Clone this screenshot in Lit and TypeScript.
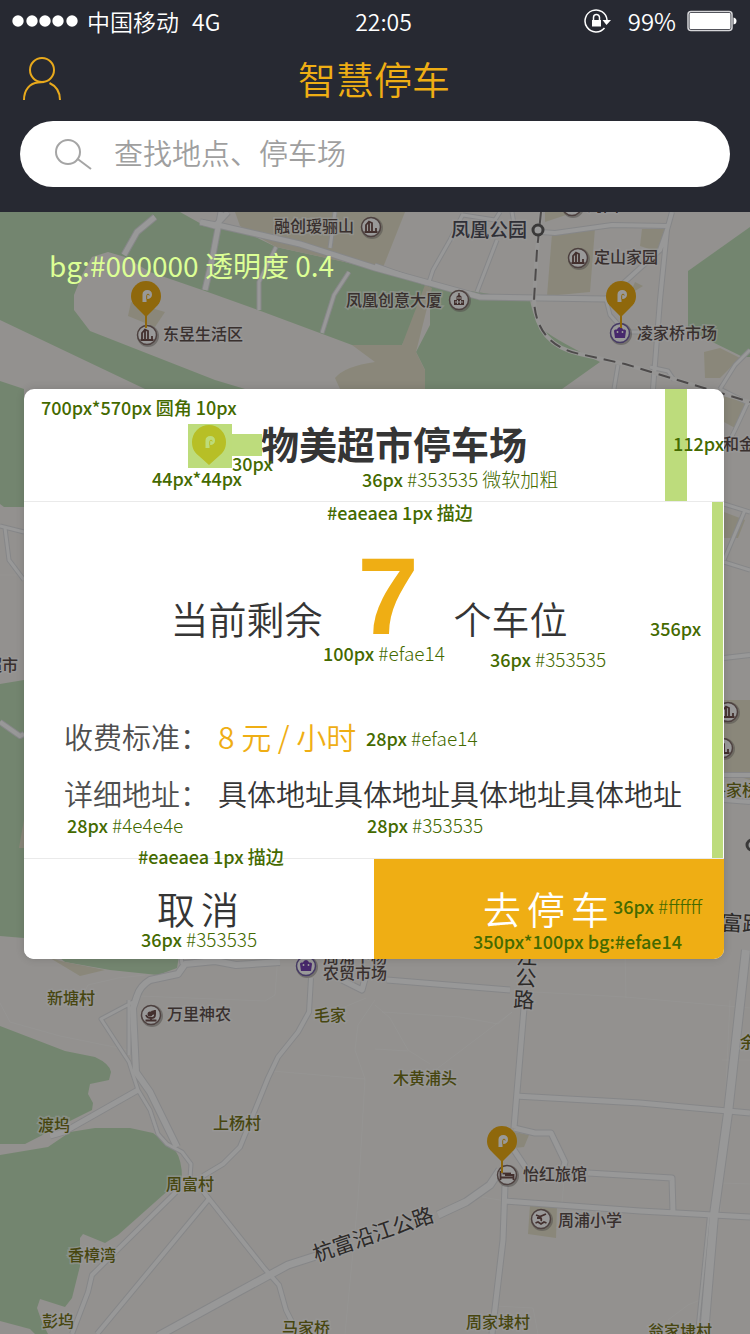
import { LitElement, html, svg, css } from "lit";
import { customElement } from "lit/decorators.js";
import { styleMap } from "lit/directives/style-map.js";

const FONT = css`"Noto Sans CJK SC", "Noto Sans", sans-serif`;

type Label = { x: number; y: number; text: string; kind: "poi" | "village" | "place" | "road"; turn?: number };

const LABELS: Label[] = [
  { x: 274, y: 232, text: "融创瑷骊山", kind: "poi" },
  { x: 346, y: 306, text: "凤凰创意大厦", kind: "poi" },
  { x: 594, y: 263, text: "定山家园", kind: "poi" },
  { x: 587, y: 211, text: "湾国", kind: "poi" },
  { x: 637, y: 339, text: "凌家桥市场", kind: "poi" },
  { x: 163, y: 340, text: "东昱生活区", kind: "poi" },
  { x: -14, y: 671, text: "超市", kind: "poi" },
  { x: 723, y: 450, text: "和金", kind: "poi" },
  { x: 323, y: 963, text: "周浦下杨", kind: "poi" },
  { x: 323, y: 979, text: "农贸市场", kind: "poi" },
  { x: 167, y: 1020, text: "万里神农", kind: "poi" },
  { x: 523, y: 1180, text: "怡红旅馆", kind: "poi" },
  { x: 558, y: 1226, text: "周浦小学", kind: "poi" },
  { x: 47, y: 1004, text: "新塘村", kind: "village" },
  { x: 314, y: 1021, text: "毛家", kind: "village" },
  { x: 393, y: 1084, text: "木黄浦头", kind: "village" },
  { x: 38, y: 1131, text: "渡坞", kind: "village" },
  { x: 213, y: 1129, text: "上杨村", kind: "village" },
  { x: 166, y: 1190, text: "周富村", kind: "village" },
  { x: 68, y: 1261, text: "香樟湾", kind: "village" },
  { x: 42, y: 1327, text: "彭坞", kind: "village" },
  { x: 282, y: 1334, text: "马家桥", kind: "village" },
  { x: 466, y: 1328, text: "周家埭村", kind: "village" },
  { x: 648, y: 1337, text: "翁家埭村", kind: "village" },
  { x: 740, y: 1048, text: "余家", kind: "village" },
  { x: 710, y: 796, text: "洛家桥", kind: "village" },
  { x: 451, y: 237, text: "凤凰公园", kind: "place" },
  { x: 316, y: 1262, text: "杭富沿江公路", kind: "road", turn: -19 },
  { x: 516, y: 964, text: "江", kind: "road", turn: 3 },
  { x: 515, y: 985, text: "公", kind: "road", turn: 3 },
  { x: 513, y: 1007, text: "路", kind: "road", turn: 3 },
  { x: 721, y: 930, text: "富路", kind: "road", turn: 3 },
];

const GREENS = [
  "M0 212H180L205 226L245 232L276 247L345 262L430 285L426 300L402 345H352L258 310L205 291L150 272L125 257L108 252L92 257L82 275L74 295V310L90 331L215 380L245 389H145L0 320Z",
  "M430 285L530 300Q534 322 545 331T600 362L562 389H425V370L416 352L430 325Z",
  "M688 271L750 227V357H743L688 330Z",
  "M0 381L24 389V507H4L0 504Z",
  "M0 684L24 680V938L0 936Z",
  "M50 950H180L177 968L158 975L110 970L65 962Z",
  "M0 1026L65 1051L95 1057Q110 1064 111 1072L109 1080L90 1084L88 1094L93 1103L92 1110L68 1122L25 1144H0Z",
  "M0 1155L48 1147L70 1132L95 1128H130L153 1133L175 1150Q182 1160 182 1178L163 1195L118 1235L105 1243L83 1234L80 1238V1266L72 1298L65 1307L40 1299L37 1308L42 1322L48 1334H35L30 1329L0 1321Z",
];

const BEIGES = [
  "M235 212H405L382 270L345 262L276 247L240 226Z",
  "M545 212H575L545 222Z",
  "M552 234L595 228L590 292L547 296Z",
  "M642 229H665L658 252L640 246Z",
  "M131 302L165 312L155 327L128 316Z",
  "M352 345H402L425 285L432 288L416 352L425 370V389H340L335 378Q345 366 375 362Z",
  "M704 352L720 348L740 358L720 378H705Z",
  "M724 389L748 402L735 428L724 422Z",
  "M724 512L745 520L738 538H724Z",
  "M724 700H750V780L724 772Z",
  "M635 282L643 286L630 294Z",
  "M514 1132L529 1135L524 1147L514 1148Z",
  "M530 1205L557 1207L556 1238L528 1234Z",
  "M50 958L65 962L105 970L80 976Z",
  "M24 820L19 848H24Z",
];

const ROADS: [number, string][] = [
  [6, "M228 212L215 226L201 222M221 212L212 260L205 290M155 217L137 232L124 255"],
  [6, "M200 222L222 226L300 244L375 268L480 297L606 299"],
  [4, "M335 212L330 248M276 247L259 282V310M349 272L334 295L322 333"],
  [4, "M375 265L428 284M463 214L450 240L433 270L428 285M497 240L477 292M463 215L495 220L500 212M512 212L515 230"],
  [5, "M541 232L555 233L612 225L668 226M672 212L667 230L660 300L653 389M667 230L660 250L606 299"],
  [4, "M606 299L610 315L625 332L652 332M618 365L614 389M650 367L668 371L674 380M750 350L735 365L720 389"],
  [4, "M720 389L750 404M748 402L735 430L724 452M724 504L750 512M745 510L724 560M724 562L750 570"],
  [4, "M0 526L24 532M5 528L9 560L24 580"],
  [5, "M0 722L20 736L24 734M724 658L750 655M724 775H750M724 800L750 802"],
  [7, "M280 962L236 965L215 961L185 964L178 974L150 980Q140 986 137 996L133 1008L136 1072L150 1092L177 1147"],
  [4, "M180 950L182 964M129 1000V1055M133 1002L101 1019L129 1062L138 1090L150 1110L158 1134L167 1144L182 1152L191 1164L190 1178"],
  [6, "M138 1090L64 1132L50 1136"],
  [5, "M311 978L309 1012L298 1032L278 1057L268 1078L253 1115L240 1147L223 1164L203 1176"],
  [5, "M176 1192L92 1275L88 1292L72 1334M208 1200L97 1334M202 1190L264 1268L279 1285L286 1310L292 1322"],
  [8, "M158 1336L240 1291L288 1265L316 1256M438 1215L466 1202L490 1185L500 1170"],
  [6, "M524 1008L514 1128M514 1128L535 1133H551L565 1162L562 1172M514 1150L526 1168"],
  [6, "M387 980L510 990M342 980L362 990L366 975M515 1096L640 1103L750 1113"],
  [6, "M505 1185L503 1240L492 1334M505 1201L640 1211L750 1217M588 1173L672 1178L673 1212"],
  [9, "M746 950L728 1113L714 1215L704 1334"],
  [3, "M709 1215L697 1334"],
];

const LANES =
  "M342 1008L366 998M375 1005L390 1018L408 1050L430 1064M382 1012L460 1017L498 1024L512 1012L438 1068M375 1049L408 1051M535 992L625 997L750 1008M625 950L626 998M272 1071L365 1079L358 1200L345 1334M365 1079L355 1050L358 1025L375 1000M139 996L265 1001L275 995L278 955M0 1003L10 1022L60 1036L129 1050M78 1005L88 985L118 978L145 975M482 1197L505 1201M565 1170L562 1202M495 1306L533 1308L538 1334M668 1320L688 1305L700 1300M722 1060H750M722 1183L750 1184M730 1000L720 1215M24 575H0";

type Poi = { x: number; y: number; kind: "building" | "tower" | "shop" | "farm" | "bed" | "school" };

const POIS: Poi[] = [
  { x: 371, y: 227, kind: "building" },
  { x: 578, y: 258, kind: "building" },
  { x: 572, y: 206, kind: "building" },
  { x: 147, y: 335, kind: "building" },
  { x: 728, y: 712, kind: "building" },
  { x: 723, y: 748, kind: "building" },
  { x: 459, y: 300, kind: "tower" },
  { x: 620, y: 333, kind: "shop" },
  { x: 306, y: 966, kind: "shop" },
  { x: 151, y: 1015, kind: "farm" },
  { x: 507, y: 1175, kind: "bed" },
  { x: 541, y: 1219, kind: "school" },
];

const GLYPHS = {
  building: svg`<path class="line" d="M-5 5V-2L-2 -5.500L1 -4V5M-2 5V-5M5 5V1M-6.500 5H6.500"/>`,
  tower: svg`<path class="solid" d="M-.7 -7H.7V-5L2.500 -3.500V0H5V5H-5V0H-2.500V-3.500L-.7 -5Z"/><path class="cut" d="M-2 -2H2M-4 2H4M-1.500 0V4M1.500 0V4"/>`,
  shop: svg`<path class="shop" d="M-6 -2Q-6 -3.500 -4.500 -3.500H-3Q-2.500 -6 0 -6T3 -3.500H4.500Q6 -3.500 6 -2L5 5H-5Z"/><path class="eyes" d="M-2.500 -2V0M2.500 -2V0"/>`,
  farm: svg`<path class="line" d="M-5.500 5.500H5.500M0 5V3M-5 0Q-4 3 0 3T4 0V-5"/><circle class="solid" cx="-1" cy="-1" r="2.500"/><path class="solid" d="M0 -4L4 -5L5 -1L1 0Z"/>`,
  bed: svg`<path class="line" d="M-6.500 -4V5M-6.500 2.500H6.500M6.500 5V0H-2"/><path class="line" d="M-4.500 -1.500H4"/>`,
  school: svg`<path class="line" d="M-5 -4L-1 -2.500L5 -5M-4 -1H0M-1 -2Q1 0 0 2M-5.500 4L-3 3L0 5L3 3L5.500 4"/>`,
};

const letterP = svg`
  <path class="letter" d="M-3.500 6V-1.500C-3.500 -4.500 -1.500 -6 1.300 -6C4.200 -6 6 -4.300 6 -1.500C6 1 4.500 2.800 2 3H0.500V6Z"/>
  <path class="slit" d="M0.700 3.200V-0.300Q0.700 -1.800 2 -1.800T3.200 -0.500"/>`;

const PINS = [
  { x: 146, y: 296 },
  { x: 621, y: 296 },
  { x: 502, y: 1141 },
];

@customElement("parking-map")
class ParkingMap extends LitElement {
  static styles = css`
    :host { display: block; overflow: hidden; background: #f5f2ee; }
    svg { display: block; width: 100%; height: 100%; }
    .green { fill: #c0deb9; }
    .beige { fill: #e6e2cb; }
    .edge { fill: none; stroke: #dfe0e3; stroke-linejoin: round; }
    .road { fill: none; stroke: #fdfdfd; stroke-linejoin: round; }
    .lane { fill: none; stroke: #fff; stroke-opacity: 0.4; stroke-width: 1; }
    .rail { fill: none; stroke: #faf9f7; stroke-width: 4; }
    .ties { fill: none; stroke: #807c7c; stroke-width: 2; stroke-dasharray: 12 7; }
    .station { fill: #fff; stroke: #62605f; stroke-width: 3; }
    text { font-family: ${FONT}; font-weight: 500; paint-order: stroke; stroke: #fff; stroke-opacity: 0.6; stroke-width: 3px; }
    .poi { font-size: 16px; fill: #5f504e; }
    .village { font-size: 16px; fill: #77761a; }
    .place { font-size: 19px; fill: #4f4f5b; }
    .road-name { font-size: 21px; font-weight: 400; fill: #4b4644; }
    .ring { fill: #fff; stroke: #806c69; stroke-width: 1.500; }
    .ring-shop { stroke: #7561a8; }
    .halo { fill: #857f7c; fill-opacity: 0.5; }
    .line { fill: none; stroke: #70504d; stroke-width: 1.800; }
    .solid { fill: #70504d; }
    .cut { fill: none; stroke: #fff; stroke-width: 1; }
    .shop { fill: #7743b4; }
    .eyes { stroke: #fff; stroke-width: 1.500; }
    .pin { fill: #efae14; }
    .stem { stroke: #efae14; stroke-width: 2; }
    .letter { fill: #fff; }
    .slit { fill: none; stroke: #efae14; stroke-width: 1; }
  `;

  render() {
    return html`
      <svg viewBox="0 212 750 1122" preserveAspectRatio="xMidYMin slice" role="img" aria-label="地图">
        ${GREENS.map((d) => svg`<path class="green" d=${d} />`)}
        ${BEIGES.map((d) => svg`<path class="beige" d=${d} />`)}
        <path class="lane" d=${LANES} />
        ${ROADS.map(([w, d]) => svg`<path class="edge" stroke-width=${w + 1} d=${d} />`)}
        ${ROADS.map(([w, d]) => svg`<path class="road" stroke-width=${w - 1} d=${d} />`)}
        <path class="rail" d="M541 212L537 250L534 300Q536 345 580 354L625 364L750 402" />
        <path class="ties" d="M541 212L537 250L534 300Q536 345 580 354L625 364L750 402" />
        <circle class="station" cx="538" cy="230" r="5" />
        <circle class="station" cx="752" cy="845" r="5" />
        ${POIS.map(
          (p) => svg`<g transform="translate(${p.x} ${p.y})">
            <circle class="halo" cx="1" cy="1" r="11" />
            <circle class="ring ${p.kind === "shop" ? "ring-shop" : ""}" r="9.500" />
            ${GLYPHS[p.kind]}
          </g>`
        )}
        ${LABELS.map(
          (l) => svg`<text class=${l.kind === "road" ? "road-name" : l.kind} transform="translate(${l.x} ${l.y}) rotate(${l.turn ?? 0})">${l.text}</text>`
        )}
        ${PINS.map(
          (p) => svg`<g transform="translate(${p.x} ${p.y})">
            <path class="stem" d="M0 15V32" />
            <path class="pin" d="M0 -15A15 15 0 0 1 15 0C15 6 12 9 9 12L0 21L-9 12C-12 9 -15 6 -15 0A15 15 0 0 1 0 -15Z" />
            ${letterP}
          </g>`
        )}
      </svg>
    `;
  }
}

type Note = { x: number; y: number; strong: string; light?: string };

const NOTES: Note[] = [
  { x: 17, y: 5, strong: "700px*570px 圆角 10px" },
  { x: 208, y: 61, strong: "30px" },
  { x: 128, y: 76, strong: "44px*44px" },
  { x: 338, y: 77, strong: "36px", light: "#353535 微软加粗" },
  { x: 649, y: 41, strong: "112px" },
  { x: 303, y: 110, strong: "#eaeaea 1px 描边" },
  { x: 299, y: 251, strong: "100px", light: "#efae14" },
  { x: 466, y: 257, strong: "36px", light: "#353535" },
  { x: 626, y: 226, strong: "356px" },
  { x: 342, y: 336, strong: "28px", light: "#efae14" },
  { x: 43, y: 423, strong: "28px", light: "#4e4e4e" },
  { x: 343, y: 423, strong: "28px", light: "#353535" },
  { x: 114, y: 454, strong: "#eaeaea 1px 描边" },
  { x: 117, y: 537, strong: "36px", light: "#353535" },
  { x: 589, y: 504, strong: "36px", light: "#ffffff" },
  { x: 449, y: 539, strong: "350px*100px bg:#efae14" },
];

@customElement("parking-dialog")
class ParkingDialog extends LitElement {
  static styles = css`
    :host { display: block; position: relative; color: #353535; font-family: ${FONT}; font-weight: 350; }
    .card { background: #fff; border-radius: 10px; overflow: hidden; box-shadow: 0 0 8px rgba(0, 0, 0, 0.15); }
    .head { display: flex; align-items: center; justify-content: center; gap: 30px; height: 112px; padding-right: 34px; border-bottom: 1px solid #eaeaea; }
    .marker { width: 44px; height: 44px; }
    h2 { margin: 0; padding-bottom: 4px; font-size: 38px; line-height: 44px; font-weight: 700; }
    .body { min-height: 356px; padding: 34px 30px 34px 40px; box-sizing: border-box; }
    .count { display: flex; align-items: baseline; justify-content: center; margin: 0; padding-right: 20px; gap: 35px; font-size: 38px; line-height: 120px; }
    .count strong { color: #efae14; font-family: "Liberation Sans", sans-serif; font-size: 110px; font-weight: 700; }
    dl { display: grid; grid-template-columns: 154px 1fr; row-gap: 13px; margin: 36px 0 0; font-size: 29px; line-height: 44px; }
    dt { color: #4e4e4e; }
    dd { margin: 0; white-space: nowrap; }
    .price { color: #efae14; font-size: 30px; }
    .actions { display: grid; grid-template-columns: 1fr 1fr; border-top: 1px solid #eaeaea; }
    button { display: flex; align-items: center; justify-content: center; gap: 6px; height: 100px; border: 0; padding: 0 2px 4px 0; background: #fff; color: #353535; font: inherit; font-size: 38px; cursor: pointer; }
    .go { background: #efae14; color: #fff; padding-right: 6px; }
    .pin { fill: #efae14; }
    .letter { fill: #fff; }
    .slit { fill: none; stroke: #efae14; stroke-width: 1; }
    .mark { position: absolute; background: #bddc7c; }
    .mark-head { top: 0; right: 37px; width: 22px; height: 112px; }
    .mark-body { top: 113px; right: 1px; width: 11px; height: 356px; }
    .mark-icon { top: 35px; left: 164px; width: 44px; height: 44px; background: rgba(152, 200, 49, 0.64); }
    .mark-gap { top: 45px; left: 208px; width: 30px; height: 22px; }
    .note { position: absolute; color: #446a00; font-size: 18px; line-height: 26px; font-weight: 500; white-space: nowrap; }
    .light { font-size: 19px; font-weight: 300; }
  `;

  render() {
    const chars = (label: string) => [...label].map((c) => html`<span>${c}</span>`);
    return html`
      <section class="card" role="dialog" aria-labelledby="lot">
        <header class="head">
          <svg class="marker" viewBox="-22 -19 44 44" aria-hidden="true">
            <path class="pin" d="M0 -17A17 17 0 0 1 17 0C17 7 14 11 10 14L0 23L-10 14C-14 11 -17 7 -17 0A17 17 0 0 1 0 -17Z" />
            ${letterP}
          </svg>
          <h2 id="lot">物美超市停车场</h2>
        </header>
        <div class="body">
          <p class="count"><span>当前剩余</span><strong>7</strong><span>个车位</span></p>
          <dl>
            <dt>收费标准：</dt>
            <dd class="price">8 元 / 小时</dd>
            <dt>详细地址：</dt>
            <dd>具体地址具体地址具体地址具体地址</dd>
          </dl>
        </div>
        <footer class="actions">
          <button type="button" aria-label="取消">${chars("取消")}</button>
          <button type="button" class="go" aria-label="去停车">${chars("去停车")}</button>
        </footer>
      </section>
      <i class="mark mark-head"></i>
      <i class="mark mark-body"></i>
      <i class="mark mark-icon"></i>
      <i class="mark mark-gap"></i>
      ${NOTES.map(
        (n) => html`<span class="note" style=${styleMap({ left: `${n.x}px`, top: `${n.y}px` })}
          >${n.strong}${n.light ? html` <span class="light">${n.light}</span>` : ""}</span
        >`
      )}
    `;
  }
}

@customElement("app-root")
class AppRoot extends LitElement {
  static styles = css`
    :host { display: flex; flex-direction: column; min-height: 100vh; font-family: ${FONT}; font-weight: 350; }
    .top { background: #272932; padding-bottom: 25px; }
    .status { display: grid; grid-template-columns: 1fr auto 1fr; align-items: center; height: 44px; padding: 0 13px 2px 12px; box-sizing: border-box; color: #fff; font-size: 23px; line-height: 32px; }
    .carrier, .power { display: flex; align-items: center; }
    .carrier { gap: 8px; }
    .power { justify-content: flex-end; gap: 11px; font-size: 24px; }
    .time { padding-left: 18px; }
    .dots { width: 67px; height: 12px; fill: #fff; }
    .net { margin-left: 5px; }
    .lock { width: 28px; height: 26px; margin-right: 5px; }
    .battery { width: 50px; height: 22px; }
    .bar { display: grid; grid-template-columns: 42px 1fr 42px; align-items: center; height: 77px; padding: 0 22px 9px 20px; box-sizing: border-box; }
    .user { display: block; border: 0; padding: 0; background: none; width: 42px; height: 46px; cursor: pointer; }
    .user svg { display: block; width: 42px; height: 46px; fill: none; stroke: #e8a91c; stroke-width: 2; }
    h1 { margin: 0; color: #efae14; text-align: center; font-size: 38px; line-height: 48px; font-weight: 350; }
    .search { display: flex; align-items: center; gap: 22px; height: 66px; margin: 0 20px; padding: 0 34px; border-radius: 33px; background: #fff; box-sizing: border-box; }
    .search svg { flex: none; width: 38px; height: 32px; fill: none; stroke: #a5a5a5; stroke-width: 2; }
    input { flex: 1; min-width: 0; border: 0; outline: 0; padding: 0 0 4px; background: none; color: #353535; font: inherit; font-size: 29px; line-height: 44px; height: 48px; box-sizing: border-box; }
    input::placeholder { color: #9f9f9f; opacity: 1; }
    main { position: relative; flex: 1; overflow: hidden; padding: 177px 26px 0 24px; }
    parking-map, .shade { position: absolute; inset: 0; }
    .shade { background: rgba(0, 0, 0, 0.4); }
    .tip { position: absolute; left: 49px; top: 34px; color: #dcff95; font-size: 28px; line-height: 38px; font-weight: 400; }
    parking-dialog { position: relative; }
  `;

  render() {
    return html`
      <header class="top">
        <div class="status">
          <div class="carrier">
            <svg class="dots" viewBox="0 0 67 12" aria-hidden="true">
              ${[6, 20, 33, 46, 60].map((x) => svg`<circle cx=${x} cy="6" r="5.700" />`)}
            </svg>
            <span>中国移动</span><span class="net">4G</span>
          </div>
          <span class="time">22:05</span>
          <div class="power">
            <svg class="lock" viewBox="0 0 28 26" fill="none" stroke="#fff" stroke-width="1.500" aria-hidden="true">
              <path d="M20.500 20A11 11 0 1 1 23 12" />
              <path d="M18.500 12H27L22.500 17Z" fill="#fff" stroke="none" />
              <path d="M8 12H17V18.500H8Z" fill="#fff" stroke="none" />
              <path d="M9.500 13V9.500A3 3 0 0 1 15.500 9.500V13" />
            </svg>
            <span>99%</span>
            <svg class="battery" viewBox="0 0 50 22" aria-hidden="true">
              <rect x="1" y="1.500" width="44" height="19" rx="3" fill="none" stroke="#d5d5d8" stroke-width="1.500" />
              <rect x="2.500" y="3" width="41" height="16" rx="1" fill="#fff" />
              <path d="M46.500 7.500Q49.500 8 49.500 11T46.500 14.500Z" fill="#fff" />
            </svg>
          </div>
        </div>
        <div class="bar">
          <button class="user" type="button" aria-label="个人中心">
            <svg viewBox="0 0 42 46">
              <circle cx="22" cy="15" r="12" />
              <path d="M4 45C4 35 10 28 18 27.500L24 27M29.500 28C36 31 40 36 40 45" />
            </svg>
          </button>
          <h1>智慧停车</h1>
        </div>
        <label class="search">
          <svg viewBox="0 0 38 32" aria-hidden="true">
            <circle cx="14" cy="14" r="12" />
            <path d="M23 20.500L37 31" />
          </svg>
          <input type="search" placeholder="查找地点、停车场" aria-label="查找地点、停车场" />
        </label>
      </header>
      <main>
        <parking-map></parking-map>
        <div class="shade"></div>
        <span class="tip">bg:#000000 透明度 0.4</span>
        <parking-dialog></parking-dialog>
      </main>
    `;
  }
}
